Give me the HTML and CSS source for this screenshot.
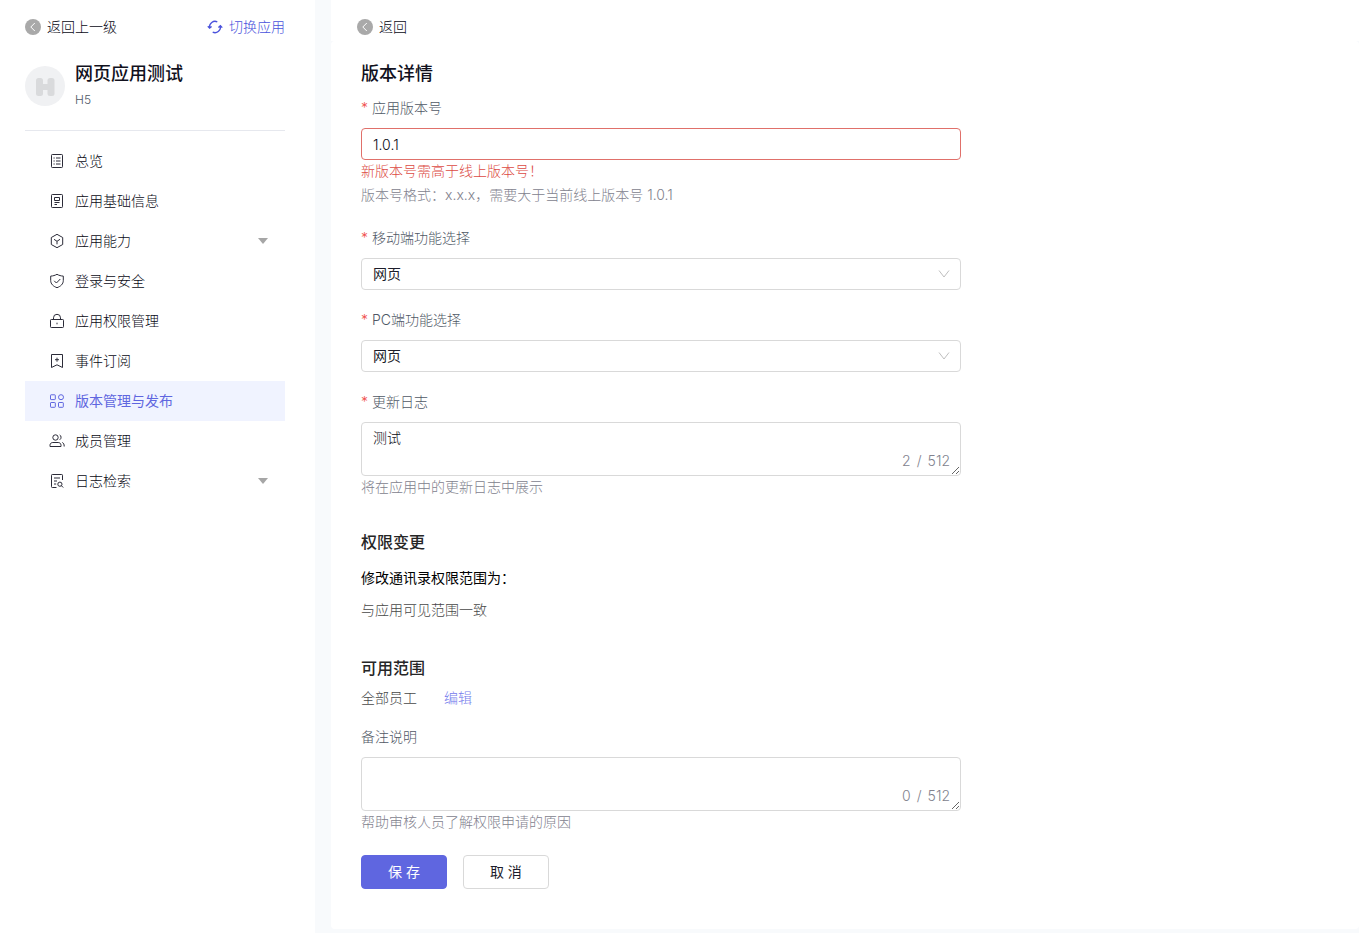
FILE: index.html
```html
<!DOCTYPE html>
<html lang="zh-CN">
<head>
<meta charset="utf-8">
<meta name="viewport" content="width=device-width, initial-scale=1">
<title>版本详情</title>
<link rel="stylesheet" href="styles.css">
</head>
<body>
<div class="layout">
  <aside class="sidebar">
    <div class="sidebar-top">
      <a class="back" href="#">
        <svg class="back-icon" viewBox="0 0 16 16"><circle cx="8" cy="8" r="8" fill="#a9a9a9"/><path d="M9.800 4 5.800 8l4 4" fill="none" stroke="#fff"/></svg>
        返回上一级
      </a>
      <a class="switch" href="#">
        <svg class="icon" viewBox="0 0 16 16"><path d="M10.300 2.800A5.500 5.500 0 0 0 2.600 8.600M5.700 13.200A5.500 5.500 0 0 0 13.400 7.400M.8 7.200l1.800 1.900 2-1.700M11.400 8.500l2-1.800 1.900 1.900" fill="none" stroke="currentColor" stroke-width="1.300"/></svg>
        切换应用
      </a>
    </div>
    <div class="app">
      <svg class="app-logo" viewBox="0 0 40 40"><circle cx="20" cy="20" r="20" fill="#f0f1f3"/><g fill="#d9dadc"><rect x="11" y="12" width="7" height="18" rx="2.500"/><rect x="22.500" y="12" width="7" height="18" rx="2.500"/><rect x="15" y="18" width="10" height="6"/></g></svg>
      <div>
        <div class="app-name">网页应用测试</div>
        <div class="app-type">H5</div>
      </div>
    </div>
    <nav class="nav">
      <a class="nav-item" href="#"><svg class="icon" viewBox="0 0 16 16"><rect x="2.500" y="1.500" width="11" height="13" rx=".8"/><path d="M4.500 5h1.200M4.500 8h1.200M4.500 11h1.200M7 5h4.500M7 8h4.500M7 11h4.500"/></svg><span>总览</span></a>
      <a class="nav-item" href="#"><svg class="icon" viewBox="0 0 16 16"><rect x="2.500" y="1.500" width="11" height="13" rx=".8"/><path d="M5.500 4.500h5v3h-5zM5.500 9.500h5M5.500 11.500h2.500"/></svg><span>应用基础信息</span></a>
      <a class="nav-item" href="#"><svg class="icon" viewBox="0 0 16 16"><path d="M8 1.300 13.700 4.500v7L8 14.700 2.300 11.500v-7zM5 6.300l3 2 3-2M8 8.300v3"/></svg><span>应用能力</span><svg class="caret" viewBox="0 0 10 6"><path d="M0 0h10L5 6z"/></svg></a>
      <a class="nav-item" href="#"><svg class="icon" viewBox="0 0 16 16"><path d="M8 1.300c2 1.100 4 1.700 6.300 1.800v4.400c0 3.500-2.500 5.800-6.300 7.200-3.800-1.400-6.300-3.700-6.300-7.200V3.100C4 3 6 2.400 8 1.300zM5.200 7.800l2.200 2.200 3.900-4"/></svg><span>登录与安全</span></a>
      <a class="nav-item" href="#"><svg class="icon" viewBox="0 0 16 16"><rect x="1.500" y="6.500" width="13" height="8" rx=".8"/><path d="M4.500 6.500V4.800a3.500 3.500 0 0 1 7 0v1.700M8 9.700v1.600"/></svg><span>应用权限管理</span></a>
      <a class="nav-item" href="#"><svg class="icon" viewBox="0 0 16 16"><path d="M2.500 1.500h11v13L8 11.800 2.500 14.500zM8 4.700v4M6 6.700h4"/></svg><span>事件订阅</span></a>
      <a class="nav-item active" href="#"><svg class="icon" viewBox="0 0 16 16"><rect x="1.500" y="1.800" width="4.800" height="4.800" rx=".6"/><circle cx="12" cy="4.200" r="2.500"/><rect x="1.500" y="9.500" width="4.800" height="4.800" rx=".6"/><rect x="9.500" y="9.500" width="4.800" height="4.800" rx=".6"/></svg><span>版本管理与发布</span></a>
      <a class="nav-item" href="#"><svg class="icon" viewBox="0 0 16 16"><circle cx="6.500" cy="4.500" r="2.700"/><path d="M1 13.500v-1.200c0-1.700 1.200-2.800 2.800-2.800h5.400c1.600 0 2.800 1.100 2.800 2.800v1.200zM10.700 2c1.700.5 1.900 3.800 0 4.800M13.300 9.500c1.300.6 1.900 1.600 1.900 4"/></svg><span>成员管理</span></a>
      <a class="nav-item" href="#"><svg class="icon" viewBox="0 0 16 16"><path d="M7.500 14.500H3.300a.8.8 0 0 1-.8-.8V2.300a.8.800 0 0 1 .8-.8h9.400a.8.800 0 0 1 .8.8V7M5 5h6M5 8h3M5 11h2.200M12.300 12.600l1.900 1.900"/><circle cx="10.900" cy="11.200" r="2.100"/></svg><span>日志检索</span><svg class="caret" viewBox="0 0 10 6"><path d="M0 0h10L5 6z"/></svg></a>
    </nav>
  </aside>

  <main class="main">
    <header class="topbar">
      <a class="back" href="#">
        <svg class="back-icon" viewBox="0 0 16 16"><circle cx="8" cy="8" r="8" fill="#a9a9a9"/><path d="M9.800 4 5.800 8l4 4" fill="none" stroke="#fff"/></svg>
        返回
      </a>
    </header>
    <form class="panel">
      <h1 class="title">版本详情</h1>
      <div class="field">
        <label class="label required" for="version">应用版本号</label>
        <input class="control invalid" id="version" type="text" value="1.0.1">
        <p class="hint error">新版本号需高于线上版本号！</p>
        <p class="hint spaced">版本号格式：x.x.x，需要大于当前线上版本号 1.0.1</p>
      </div>
      <div class="field">
        <label class="label required" for="mobile">移动端功能选择</label>
        <div class="control-wrap">
          <select class="control" id="mobile"><option>网页</option></select>
          <svg class="chevron" viewBox="0 0 12 12"><path d="M1 2.500 6 9l5-6.500"/></svg>
        </div>
      </div>
      <div class="field">
        <label class="label required" for="pc">PC端功能选择</label>
        <div class="control-wrap">
          <select class="control" id="pc"><option>网页</option></select>
          <svg class="chevron" viewBox="0 0 12 12"><path d="M1 2.500 6 9l5-6.500"/></svg>
        </div>
      </div>
      <div class="field">
        <label class="label required" for="log">更新日志</label>
        <div class="control-wrap">
          <textarea class="control area" id="log" maxlength="512">测试</textarea>
          <span class="count"><span>2</span><span>/</span><span>512</span></span>
        </div>
        <p class="hint">将在应用中的更新日志中展示</p>
      </div>
      <section class="section">
        <h2 class="subtitle">权限变更</h2>
        <p class="lead">修改通讯录权限范围为：</p>
        <p class="text">与应用可见范围一致</p>
      </section>
      <section class="section">
        <h2 class="subtitle">可用范围</h2>
        <div class="scope"><span>全部员工</span><a class="edit" href="#">编辑</a></div>
      </section>
      <div class="field remark">
        <label class="label" for="remark">备注说明</label>
        <div class="control-wrap">
          <textarea class="control area" id="remark" maxlength="512"></textarea>
          <span class="count"><span>0</span><span>/</span><span>512</span></span>
        </div>
        <p class="hint">帮助审核人员了解权限申请的原因</p>
      </div>
      <div class="actions">
        <button class="btn primary" type="button">保 存</button>
        <button class="btn" type="button">取 消</button>
      </div>
    </form>
  </main>
</div>
</body>
</html>
```
FILE: styles.css
```css
* { box-sizing: border-box; }

body {
  margin: 0;
  background: #f8fafc;
  color: #080814;
  font: 14px/24px Inter, "Noto Sans CJK SC", sans-serif;
  font-weight: 300;
}

h1, h2, p { margin: 0; }
a { color: inherit; text-decoration: none; }

.layout {
  display: flex;
  gap: 16px;
  min-height: 100vh;
}

.sidebar {
  flex: 0 0 315px;
  padding: 15px 30px 15px 25px;
  background: #fff;
}

.sidebar-top {
  display: flex;
  justify-content: space-between;
}

.back, .switch {
  display: flex;
  align-items: center;
  gap: 6px;
}

.back-icon, .icon {
  flex: none;
  width: 16px;
  height: 16px;
}

.switch { color: #4a52dc; }

.app {
  display: flex;
  align-items: center;
  gap: 10px;
  padding: 21px 0 18px;
  border-bottom: 1px solid #e6e8ee;
}

.app-logo { width: 40px; height: 40px; }

.app-name {
  font-size: 18px;
  font-weight: 500;
  line-height: 28px;
  color: #11111d;
}

.app-type {
  font-size: 12px;
  line-height: 24px;
  color: #505866;
}

.nav { padding-top: 10px; }

.nav-item {
  display: flex;
  align-items: center;
  gap: 10px;
  height: 40px;
  padding: 0 17px 0 24px;
}

.nav-item .icon {
  fill: none;
  stroke: #2b2b38;
  stroke-width: 1;
}

.nav-item.active {
  background: #f0f3ff;
  color: #5f66e0;
  font-weight: 400;
}

.nav-item.active .icon { stroke: #5f66e0; }

.nav-item .caret {
  width: 10px;
  height: 6px;
  margin-left: auto;
  fill: #a6a6a6;
}

.main {
  flex: 1;
  min-width: 0;
  padding-bottom: 4px;
}

.topbar {
  padding: 15px 26px 2px;
  background: #fff;
}

.panel {
  padding: 19px 30px 40px;
  border-radius: 4px;
  background: #fff;
}

.title {
  margin-bottom: 8px;
  font-size: 18px;
  font-weight: 500;
  line-height: 28px;
  color: #11111d;
}

.field {
  max-width: 600px;
  margin-bottom: 18px;
}

.label {
  display: block;
  margin-bottom: 8px;
  color: #505866;
}

.required::before {
  content: "*";
  margin-right: 4px;
  color: #f0504c;
}

.control-wrap { position: relative; }

.control {
  display: block;
  width: 100%;
  height: 32px;
  padding: 4px 11px;
  border: 1px solid #d9d9d9;
  border-radius: 4px;
  background: #fff;
  color: #080814;
  font: inherit;
  line-height: 22px;
  appearance: none;
}

select.control {
  color: #1d1d2b;
  font-weight: 400;
}

.control.invalid { border-color: #e0706a; }

.control.area {
  height: 54px;
  resize: vertical;
}

.chevron {
  position: absolute;
  top: 10px;
  right: 11px;
  width: 12px;
  height: 12px;
  fill: none;
  stroke: #bfbfbf;
  pointer-events: none;
}

.count {
  position: absolute;
  right: 11px;
  bottom: 3px;
  display: flex;
  gap: 6px;
  color: #82828e;
  pointer-events: none;
}

.hint {
  line-height: 22px;
  color: #82828e;
}

.hint.error { color: #dc4a44; }
.hint.spaced { margin: 2px 0 20px; }

.section { margin-top: 32px; }
.section + .section { margin-top: 34px; }

.subtitle {
  font-size: 16px;
  font-weight: 500;
  line-height: 24px;
  color: #262626;
}

.lead {
  margin: 12px 0 8px;
  color: #000;
  font-weight: 400;
}

.text, .scope { color: #484848; }

.scope {
  display: flex;
  gap: 27px;
  margin-top: 6px;
}

.edit { color: #747aec; }

.remark {
  margin: 15px 0 22px;
}

.actions {
  display: flex;
  gap: 16px;
}

.btn {
  height: 34px;
  padding: 0 26px;
  border: 1px solid #d9d9d9;
  border-radius: 4px;
  background: #fff;
  color: #1d1d2b;
  font: inherit;
  font-weight: 400;
}

.btn.primary {
  border-color: #5f66e0;
  background: #5f66e0;
  color: #fff;
}
```
